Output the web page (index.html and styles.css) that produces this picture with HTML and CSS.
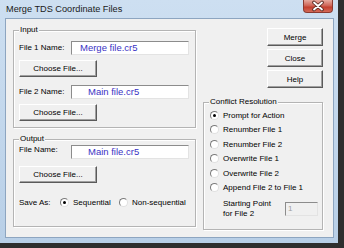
FILE: index.html
```html
<!DOCTYPE html>
<html lang="en">
<head>
    <meta charset="UTF-8">
    <title>Merge TDS Coordinate Files</title>
    <link rel="stylesheet" href="styles.css">
</head>
<body>
    <div class="window">
        <div class="titlebar">
            <span class="title">Merge TDS Coordinate Files</span>
            <div class="close">
                <svg width="30" height="12" viewBox="0 0 30 12">
                    <path d="M11 2.5 L19 9.5 M19 2.5 L11 9.5" stroke="#5a2a22" stroke-width="3.6" stroke-linecap="round"/>
                    <path d="M11 2.5 L19 9.5 M19 2.5 L11 9.5" stroke="#fff" stroke-width="1.8" stroke-linecap="round"/>
                </svg>
            </div>
        </div>
        <div class="client">
            <div class="col-left">
                <fieldset class="group group-input">
                    <legend>Input</legend>
                    <div class="group-body">
                        <div class="row">
                            <span class="label">File 1 Name:</span>
                            <div class="field">Merge file.cr5</div>
                        </div>
                        <button class="btn btn-choose">Choose File...</button>
                        <div class="row row-gap">
                            <span class="label">File 2 Name:</span>
                            <div class="field field-indent">Main file.cr5</div>
                        </div>
                        <button class="btn btn-choose">Choose File...</button>
                    </div>
                </fieldset>
                <fieldset class="group group-output">
                    <legend>Output</legend>
                    <div class="group-body">
                        <div class="row row-top">
                            <span class="label">File Name:</span>
                            <div class="field field-indent">Main file.cr5</div>
                        </div>
                        <button class="btn btn-choose btn-out">Choose File...</button>
                        <div class="save-row">
                            <span class="save-label">Save As:</span>
                            <span class="opt opt-first"><span class="radio on"></span>Sequential</span>
                            <span class="opt"><span class="radio"></span>Non-sequential</span>
                        </div>
                    </div>
                </fieldset>
            </div>
            <div class="col-right">
                <div class="actions">
                    <button class="btn btn-action">Merge</button>
                    <button class="btn btn-action">Close</button>
                    <button class="btn btn-action">Help</button>
                </div>
                <fieldset class="group group-conflict">
                    <legend>Conflict Resolution</legend>
                    <div class="group-body">
                        <div class="opt-row"><span class="radio on"></span>Prompt for Action</div>
                        <div class="opt-row"><span class="radio"></span>Renumber File 1</div>
                        <div class="opt-row"><span class="radio"></span>Renumber File 2</div>
                        <div class="opt-row"><span class="radio"></span>Overwrite File 1</div>
                        <div class="opt-row"><span class="radio"></span>Overwrite File 2</div>
                        <div class="opt-row"><span class="radio"></span>Append File 2 to File 1</div>
                        <div class="start-row">
                            <span class="start-label">Starting Point<br>for File 2</span>
                            <div class="field field-disabled">1</div>
                        </div>
                    </div>
                </fieldset>
            </div>
        </div>
    </div>
</body>
</html>
```

FILE: styles.css
```css
body {
    margin: 0;
    background: #2e2e2e;
    font-family: 'Liberation Sans', Arial, sans-serif;
    font-size: 8px;
    color: #000;
}
.window {
    width: 338px;
    height: 243px;
    box-sizing: border-box;
    padding: 0 4px 5px 5px;
    background: linear-gradient(#cddff1, #b8cfe7);
    display: flex;
    flex-direction: column;
}
.titlebar {
    height: 18px;
    display: flex;
    align-items: flex-start;
}
.title {
    padding-left: 1px;
    line-height: 19px;
    font-size: 9.2px;
    color: #1a1a1a;
}
.close {
    margin-left: auto;
    margin-right: 1px;
    width: 30px;
    height: 13px;
    box-sizing: border-box;
    border: 1px solid #8a3a30;
    border-top: none;
    border-radius: 0 0 4px 4px;
    background: linear-gradient(#e6aa9f, #d0685a 45%, #c4402f 60%, #d46a58);
    overflow: hidden;
}
.close svg {
    display: block;
    margin-left: -1px;
}
.client {
    flex: 1;
    box-sizing: border-box;
    background: #f0f0f0;
    border: 1px solid #8da5c0;
    display: flex;
    padding: 6px 0 0 7px;
}
.col-left {
    width: 183px;
    display: flex;
    flex-direction: column;
}
.col-right {
    width: 120px;
    margin-left: 7px;
    margin-top: 3px;
}
.group {
    margin: 0;
    padding: 0;
    min-width: 0;
    border: 1px solid #b4b4b4;
    box-shadow: inset 1px 1px #fff, 1px 1px #fff;
}
.group legend {
    margin-left: 5px;
    padding: 0 1px;
    line-height: 10px;
    background: #f0f0f0;
}
.group-body {
    padding: 6px 0 6px 5px;
}
.group-output {
    margin-top: 6px;
}
.group-output .group-body {
    padding-top: 1px;
    padding-bottom: 18px;
}
.row {
    display: flex;
    align-items: center;
}
.row-gap {
    margin-top: 8px;
}
.row-top {
    align-items: flex-start;
}
.label {
    width: 52px;
    line-height: 10px;
}
.field {
    box-sizing: border-box;
    width: 118px;
    height: 14px;
    background: #fff;
    border: 1px solid;
    border-color: #8c8c8c #e3e3e3 #e3e3e3 #8c8c8c;
    padding-left: 8px;
    font-size: 9.5px;
    line-height: 12px;
    color: #3a32c4;
}
.field-indent {
    padding-left: 16px;
}
.btn {
    display: block;
    box-sizing: border-box;
    padding: 0;
    background: #f0f0f0;
    border: 1px solid;
    border-color: #fff #5a5a5a #5a5a5a #fff;
    box-shadow: inset -1px -1px #a0a0a0;
    font: inherit;
    color: #000;
    text-align: center;
}
.btn-choose {
    width: 78px;
    height: 17px;
    margin-top: 5px;
}
.btn-out {
    margin-top: 7px;
}
.save-row {
    display: flex;
    align-items: center;
    height: 12px;
    margin-top: 13px;
}
.save-label {
    width: 41px;
}
.opt {
    display: flex;
    align-items: center;
}
.opt-first {
    width: 59px;
}
.radio {
    flex: none;
    position: relative;
    width: 9px;
    height: 9px;
    box-sizing: border-box;
    margin-right: 4px;
    border-radius: 50%;
    background: #fff;
    border: 1px solid;
    border-color: #7a7a7a #e0e0e0 #e0e0e0 #7a7a7a;
}
.radio.on::after {
    content: "";
    position: absolute;
    left: 2px;
    top: 2px;
    width: 3px;
    height: 3px;
    border-radius: 50%;
    background: #000;
}
.actions {
    display: flex;
    flex-direction: column;
    align-items: flex-end;
    gap: 3px;
}
.btn-action {
    width: 56px;
    height: 18px;
}
.group-conflict {
    margin-top: 9px;
}
.group-conflict .group-body {
    padding: 1px 0 10px 6px;
}
.opt-row {
    display: flex;
    align-items: center;
    height: 14.5px;
}
.start-row {
    display: flex;
    align-items: center;
    margin-top: 4px;
    padding-left: 13px;
}
.start-label {
    width: 62px;
    line-height: 10px;
}
.field-disabled {
    width: 33px;
    background: #f0f0f0;
    padding-left: 2px;
    font-size: 8px;
    color: #a0a0a0;
}
```
